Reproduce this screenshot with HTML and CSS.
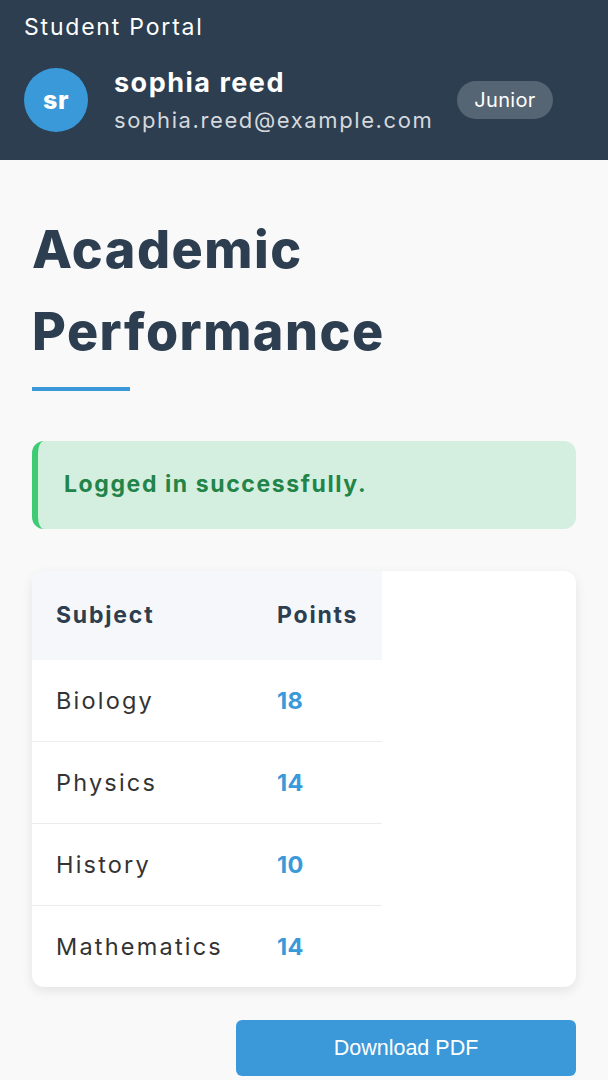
FILE: index.html
```html
<!DOCTYPE html>
<html lang="en">
<head>
<meta charset="utf-8">
<title>Student Portal</title>
<link rel="stylesheet" href="styles.css">
</head>
<body>
<header class="topbar">
  <div class="brand">Student Portal</div>
  <div class="user">
    <div class="avatar">sr</div>
    <div class="user-info">
      <div class="user-name">sophia reed</div>
      <div class="user-email">sophia.reed@example.com</div>
    </div>
    <span class="badge">Junior</span>
  </div>
</header>
<main class="content">
  <h1 class="title">Academic Performance</h1>
  <div class="title-bar"></div>
  <div class="alert">Logged in successfully.</div>
  <div class="card">
    <table class="grades">
      <colgroup>
        <col class="col-subject">
        <col class="col-points">
      </colgroup>
      <thead>
        <tr><th>Subject</th><th>Points</th></tr>
      </thead>
      <tbody>
        <tr><td>Biology</td><td class="pts">18</td></tr>
        <tr><td>Physics</td><td class="pts">14</td></tr>
        <tr><td>History</td><td class="pts">10</td></tr>
        <tr><td>Mathematics</td><td class="pts">14</td></tr>
      </tbody>
    </table>
  </div>
  <div class="actions">
    <button class="btn" type="button">Download PDF</button>
  </div>
</main>
</body>
</html>
```
FILE: styles.css
```css
* { box-sizing: border-box; }
html, body { margin: 0; padding: 0; }
body {
  background: #f9f9f9;
  font-family: Inter, "Open Sans", sans-serif;
  color: #333333;
}
.topbar {
  background: #2c3e50;
  color: #ffffff;
  padding: 10px 24px 23px;
}
.brand {
  font-size: 23px;
  line-height: 34px;
  letter-spacing: 1.8px;
  margin-bottom: 19px;
}
.user {
  display: flex;
  align-items: center;
}
.avatar {
  width: 64px;
  height: 64px;
  border-radius: 50%;
  background: #3a99d9;
  color: #fff;
  font-weight: 800;
  font-size: 25px;
  letter-spacing: 0.5px;
  display: flex;
  align-items: center;
  justify-content: center;
  flex-shrink: 0;
  margin-right: 26px;
}
.user-name {
  font-size: 27px;
  font-weight: 700;
  line-height: 40px;
  letter-spacing: 1.5px;
}
.user-email {
  font-size: 22px;
  line-height: 34px;
  letter-spacing: 1.6px;
  color: #d5d8dc;
}
.badge {
  margin-left: 24px;
  height: 38px;
  padding: 0 17px;
  border-radius: 19px;
  background: #566573;
  font-size: 20px;
  line-height: 38px;
  letter-spacing: 0.3px;
  color: #fff;
}
.content {
  padding: 49px 32px 20px;
}
.title {
  margin: 0;
  font-size: 52px;
  line-height: 82px;
  font-weight: 800;
  letter-spacing: 1.5px;
  color: #2c3e50;
}
.title-bar {
  width: 98px;
  height: 4px;
  background: #3a99d9;
  margin-top: 14px;
}
.alert {
  margin-top: 50px;
  background: #d4efdf;
  border-left: 6px solid #3fcb73;
  border-radius: 12px;
  padding: 27px 26px 28px;
  font-size: 23px;
  line-height: 33px;
  font-weight: 700;
  letter-spacing: 1.6px;
  color: #228448;
}
.card {
  margin-top: 42px;
  background: #ffffff;
  border-radius: 12px;
  overflow: hidden;
  box-shadow: 0 4px 12px rgba(0, 0, 0, 0.09);
}
.grades {
  border-collapse: collapse;
  table-layout: fixed;
  width: 350px;
}
.col-subject { width: 221px; }
.col-points { width: 129px; }
.grades th {
  background: #f5f7fa;
  color: #2c3e50;
  font-weight: 700;
  text-align: left;
  font-size: 23px;
  line-height: 33px;
  letter-spacing: 1.8px;
  padding: 28px 24px;
  white-space: nowrap;
}
.grades td {
  font-size: 23.5px;
  line-height: 33px;
  letter-spacing: 2.2px;
  padding: 24px 24px;
  border-bottom: 1px solid #ececec;
  white-space: nowrap;
}
.grades tbody tr:last-child td { border-bottom: none; }
.grades .pts {
  color: #3a99d9;
  font-weight: 700;
  letter-spacing: 0.3px;
}
.actions {
  display: flex;
  justify-content: flex-end;
  margin-top: 33px;
}
.btn {
  width: 340px;
  height: 56px;
  border: none;
  border-radius: 6px;
  background: #3b99d9;
  color: #fff;
  font-family: "Liberation Sans", Arial, sans-serif;
  font-size: 21.5px;
}
```
